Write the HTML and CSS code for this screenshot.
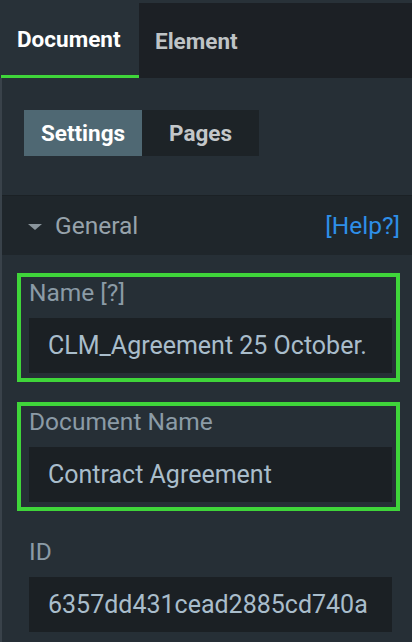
FILE: index.html
```html
<!DOCTYPE html>
<html>
<head>
<meta charset="utf-8">
<link rel="stylesheet" href="styles.css">
</head>
<body>
<div class="app">
  <div class="tabs">
    <div class="tab active">Document</div>
    <div class="tab">Element</div>
  </div>
  <div class="panel">
    <div class="segments">
      <div class="seg active">Settings</div>
      <div class="seg">Pages</div>
    </div>
    <div class="section-head">
      <div class="section-title"><span class="caret"></span>General</div>
      <a class="help">[Help?]</a>
    </div>
    <div class="fields">
      <div class="field boxed first">
        <div class="label">Name [?]</div>
        <div class="input">CLM_Agreement 25 October.</div>
      </div>
      <div class="field boxed second">
        <div class="label">Document Name</div>
        <div class="input">Contract Agreement</div>
      </div>
      <div class="field third">
        <div class="label">ID</div>
        <div class="input">6357dd431cead2885cd740a</div>
      </div>
    </div>
  </div>
</div>
</body>
</html>
```

FILE: styles.css
```css
html, body {
  margin: 0;
  padding: 0;
}
body {
  background: #262f36;
  font-family: Roboto, "Liberation Sans", sans-serif;
  width: 412px;
  height: 642px;
  overflow: hidden;
}
.app {
  display: flex;
  flex-direction: column;
  height: 642px;
}
.tabs {
  display: flex;
  background: #283138;
  padding-top: 3px;
  height: 75px;
}
.tab {
  display: flex;
  align-items: center;
  font-size: 22.5px;
  font-weight: 700;
  color: #bfc3c6;
  padding-left: 16px;
  box-sizing: border-box;
}
.tab.active {
  width: 138px;
  color: #ffffff;
  border-bottom: 3px solid #3fd53a;
  margin-left: 1px;
  padding-left: 16px;
}
.tab:not(.active) {
  flex: 1;
  background: #1c2025;
}
.panel {
  flex: 1;
  background: #262f36;
  border-left: 2px solid #39424a;
}
.segments {
  display: flex;
  margin: 32px 0 0 22px;
  height: 46px;
}
.seg {
  width: 117px;
  display: flex;
  align-items: center;
  justify-content: center;
  font-size: 22.5px;
  font-weight: 700;
  color: #c3c7ca;
  background: #1d2327;
}
.seg.active {
  width: 118px;
  background: #4f6873;
  color: #ffffff;
}
.section-head {
  margin-top: 39px;
  height: 60px;
  background: #1f262b;
  border-top: 1px solid #1b2125;
  box-sizing: border-box;
  display: flex;
  align-items: center;
  justify-content: space-between;
  padding: 0 12px 0 26px;
}
.section-title {
  display: flex;
  align-items: center;
  font-size: 24.5px;
  color: #97a3ab;
}
.caret {
  width: 0;
  height: 0;
  border-left: 7px solid transparent;
  border-right: 7px solid transparent;
  border-top: 6px solid #8a959c;
  margin-right: 13px;
  margin-top: 2px;
}
.help {
  font-size: 24.5px;
  color: #2e8fe8;
}
.fields {
  padding: 0 20px 0 27px;
}
.field {
  display: flex;
  flex-direction: column;
}
.label {
  font-size: 24.5px;
  line-height: 28px;
  color: #8b9ba6;
}
.input {
  margin-top: 11px;
  height: 55px;
  background: #1b2024;
  color: #a9bdcb;
  font-size: 25px;
  display: flex;
  align-items: center;
  padding-left: 19px;
}
.boxed {
  border: 4px solid #3fd53a;
  margin-left: -12px;
  margin-right: -8px;
  padding: 2px 4px 5px 8px;
}
.first {
  margin-top: 18px;
}
.second {
  margin-top: 20px;
}
.third {
  margin-top: 27px;
}
```
